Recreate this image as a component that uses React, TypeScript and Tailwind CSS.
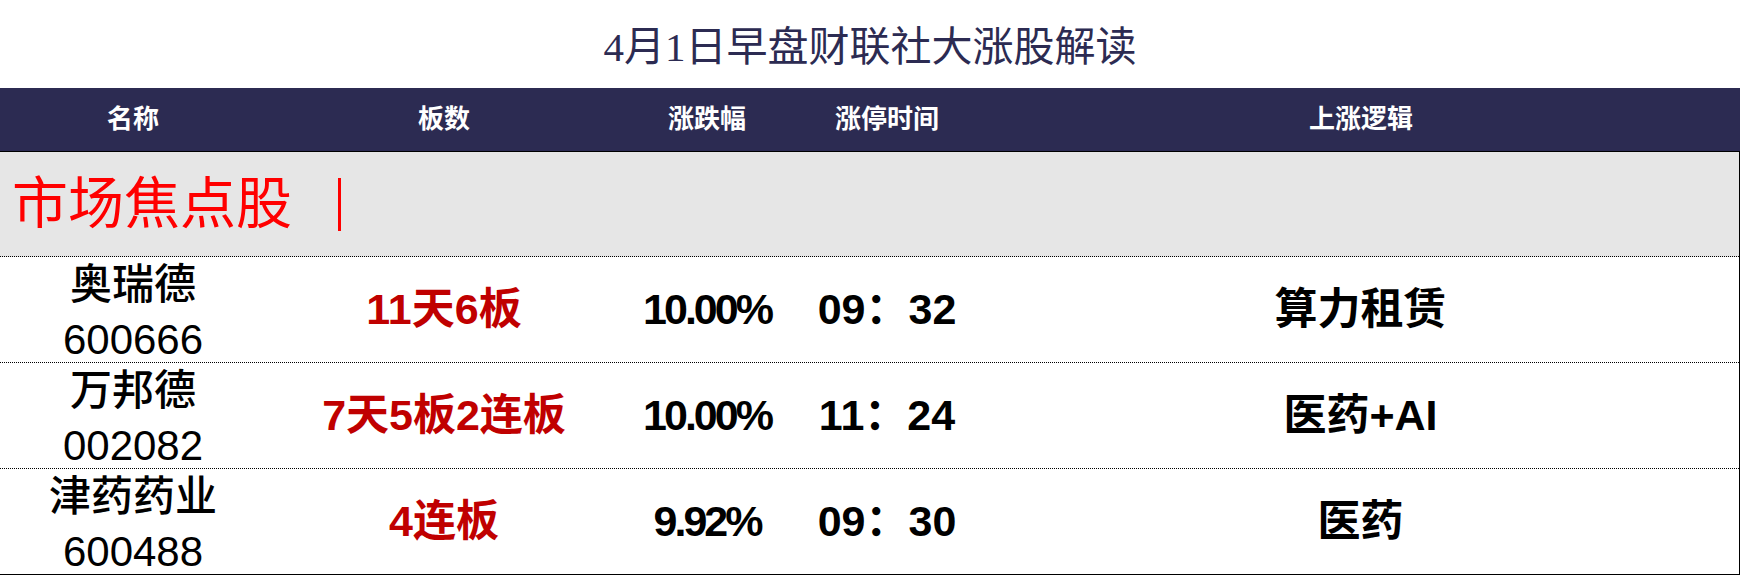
const rows = [
  { name: "奥瑞德", code: "600666", board: "11天6板", pct: "10.00%", time: "09：32", logic: "算力租赁" },
  { name: "万邦德", code: "002082", board: "7天5板2连板", pct: "10.00%", time: "11：24", logic: "医药+AI" },
  { name: "津药药业", code: "600488", board: "4连板", pct: "9.92%", time: "09：30", logic: "医药" },
];

const cols = "grid grid-cols-[266px_356px_170px_190px_1fr]";

export default function App() {
  return (
    <div className="w-[1740px] h-[576px] bg-white overflow-hidden font-['Liberation_Sans','Noto_Sans_CJK_SC',sans-serif]">
      {/* Title */}
      <div className="h-[88px] flex items-center justify-center pt-[6px]">
        <h1 className="text-[41px] leading-none text-[#2c2b52] font-['Liberation_Serif','Noto_Sans_CJK_SC',serif]">
          4月1日早盘财联社大涨股解读
        </h1>
      </div>

      {/* Column header */}
      <div className={`${cols} h-[64px] bg-[#2c2b52] border-b border-black text-white text-[26px] font-bold`}>
        <div className="flex items-center justify-center">名称</div>
        <div className="flex items-center justify-center">板数</div>
        <div className="flex items-center justify-center">涨跌幅</div>
        <div className="flex items-center justify-center">涨停时间</div>
        <div className="flex items-center justify-center">上涨逻辑</div>
      </div>

      <div className="border-r border-black">
        {/* Section */}
        <div className="h-[105px] bg-[#e6e6e6] border-b border-dotted border-black flex items-center pl-[12px]">
          <span className="text-[56px] leading-none text-[#ff0000]">市场焦点股</span>
          <span className="ml-[46px] w-[3px] h-[53px] bg-[#ff0000]" />
        </div>

        {/* Rows */}
        {rows.map((r, i) => (
          <div
            key={r.code}
            className={`${cols} h-[106px] border-b ${i === rows.length - 1 ? "border-solid" : "border-dotted"} border-black`}
          >
            <div className="flex flex-col items-center justify-center gap-[13px] text-[42px] leading-none font-medium text-black pt-[6px]">
              <span>{r.name}</span>
              <span>{r.code}</span>
            </div>
            <div className="flex items-center justify-center text-[43px] font-bold text-[#c00000]">{r.board}</div>
            <div className="flex items-center justify-center text-[43px] font-bold text-black tracking-[-3px]">{r.pct}</div>
            <div className="flex items-center justify-center text-[43px] font-bold text-black">{r.time}</div>
            <div className="flex items-center justify-center text-[43px] font-bold text-black">{r.logic}</div>
          </div>
        ))}
      </div>
    </div>
  );
}
